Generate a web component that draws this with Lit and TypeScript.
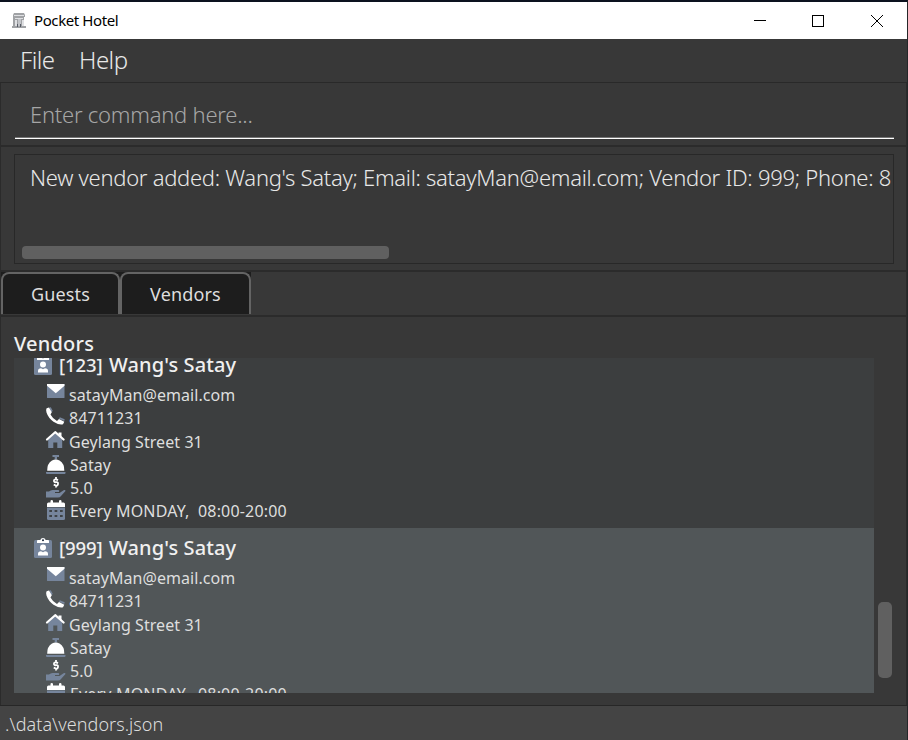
import { LitElement, html, svg, css } from "lit";
import { customElement, property } from "lit/decorators.js";

interface Vendor {
  id: string;
  name: string;
  email: string;
  phone: string;
  address: string;
  service: string;
  cost: string;
  hours: string;
}

const badge = svg`<svg class="ico" viewBox="0 0 18 20" width="18" height="20">
  <rect class="b" x="0" y="2" width="18" height="18" rx="1.5"/>
  <path class="w" d="M3 5V2.8Q3 2 4 2H6.3Q7 0 9 0T11.700 2H14Q15 2 15 2.800V5Z"/>
  <circle class="k" cx="9" cy="2.300" r="1"/>
  <circle class="w" cx="9" cy="9.600" r="3"/>
  <path class="w" d="M4 17.500V16Q4 13.300 7 13.300L9 14.300 11 13.300Q14 13.300 14 16V17.500Z"/></svg>`;
const mail = svg`<svg class="ico" viewBox="0 0 18 14" width="18" height="14">
  <rect class="b" width="17.500" height="14" rx=".5"/>
  <path class="w" d="M0 0H17.500V1.800L8.800 9.300 0 1.800Z"/></svg>`;
const phone = svg`<svg class="ico" viewBox="0 0 19 18" width="19" height="18">
  <path class="b" d="M3.300.500 4.800.200 6.800 4 5.300 5ZM13 11.700 13.800 10.200 18.700 12.300 18.200 14Z"/>
  <path class="w" d="M3 .500.600 1.200Q-.300 2.500.500 5.500 2.300 11 7.500 14.700 13 18.300 17 17.300L18.300 14.700 13 12 11 14Q6.500 11.500 4.500 7.500L5.800 5.300Z"/></svg>`;
const house = svg`<svg class="ico" viewBox="0 0 19 17" width="19" height="17">
  <path class="b" d="M2.200 8.500 9.200 2.500 16.200 8.500V17H11.300V11.500H7.300V17H2.200Z"/>
  <path class="l" d="M1 8.500 9.200 1.200 17.600 8.500"/>
  <path class="w" d="M12.500 1.500H15.500V7L12.500 4.300Z"/></svg>`;
const bell = svg`<svg class="ico" viewBox="0 0 20 19" width="20" height="19">
  <path class="b" d="M6.500 0H13V2H11V4.500H8.700V2H6.500ZM0 17H19.500V18Q19.500 19 18.500 19H1Q0 19 0 18Z"/>
  <path class="w" d="M1.200 15.700Q1 8.500 6 5.500 9.800 3.300 13.500 5.500 18.500 8.500 18.300 15.700Z"/></svg>`;
const hand = svg`<svg class="ico" viewBox="0 0 20 21" width="20" height="21">
  <path class="b" d="M0 14.500H3Q5 12.500 7.500 13H12.500Q13.800 13.500 13 15H9V16H13.500L18 13Q19.500 12.500 19.500 14L15 19Q14 20.500 12 20.500H0Z"/>
  <path class="d" d="M12 3.100Q8.400 1.300 8 3.400T10.100 5.200 11.900 7.400 7.800 7.400M10 0V2M10 8V10.500"/></svg>`;
const calendar = svg`<svg class="ico" viewBox="0 0 18 20" width="18" height="20">
  <path class="w" d="M0 7V4Q0 2.500 1.500 2.500H3.500V1Q3.500 0 4.700 0T6 1V2.500H12V1Q12 0 13.200 0T14.500 1V2.500H16.500Q18 2.500 18 4V7Z"/>
  <path class="b" d="M0 7.500H18V18.500Q18 20 16.500 20H1.500Q0 20 0 18.500Z"/>
  <path class="h" d="M2.300 10H5V12H2.300ZM7.600 10H10.300V12H7.600ZM13 10H15.700V12H13ZM2.300 15H5V17H2.300ZM7.600 15H10.300V17H7.600ZM13 15H15.700V17H13Z"/></svg>`;

@customElement("vendor-card")
export class VendorCard extends LitElement {
  @property({ attribute: false }) vendor!: Vendor;

  static styles = css`
    :host { display: block; height: 183px; box-sizing: border-box; padding-left: 20px; }
    .head { display: flex; height: 38px; align-items: center; font-size: 20px; font-weight: 500; color: #f0f0f0; white-space: pre; }
    .head .ico { margin: 2px 7px 0 0; }
    .id { width: 50px; font-size: 18.500px; letter-spacing: -.1px; }
    .name { letter-spacing: .1px; }
    .row { display: grid; grid-template-columns: 23px auto; padding-left: 12px; height: 23px; line-height: 23px; font-size: 16px; letter-spacing: .07px; color: #dedede; white-space: pre; align-items: start; }
    .tall { height: 24px; line-height: 24px; }
    .mail .ico { margin: 1px 0 0 1px; }
    .house .ico { margin-top: 1px; }
    .bell .ico { margin-top: 1px; }
    .cal .ico { margin-left: 1px; }
    .bell, .cost, .cal { grid-template-columns: 24px auto; }
    .cal { letter-spacing: .17px; }
    .ico { display: block; overflow: visible; flex: none; }
    .w { fill: #fff; }
    .b { fill: #76859c; }
    .k { fill: #16243a; }
    .h { fill: #3e4245; }
    .l { fill: none; stroke: #fff; stroke-width: 2.200; stroke-linecap: round; stroke-linejoin: round; }
    .d { fill: none; stroke: #fff; stroke-width: 1.800; }
  `;

  render() {
    const v = this.vendor;
    return html`
      <div class="head">${badge}<span class="id">[${v.id}]</span><span class="name">${v.name}</span></div>
      <div class="row tall mail">${mail}<span>${v.email}</span></div>
      <div class="row">${phone}<span>${v.phone}</span></div>
      <div class="row tall house">${house}<span>${v.address}</span></div>
      <div class="row bell">${bell}<span>${v.service}</span></div>
      <div class="row cost">${hand}<span>${v.cost}</span></div>
      <div class="row cal">${calendar}<span>${v.hours}</span></div>
    `;
  }
}

@customElement("app-root")
export class AppRoot extends LitElement {
  private vendors: Vendor[] = ["123", "999"].map((id) => ({
    id,
    name: "Wang's Satay",
    email: "satayMan@email.com",
    phone: "84711231",
    address: "Geylang Street 31",
    service: "Satay",
    cost: "5.0",
    hours: "Every MONDAY,  08:00-20:00",
  }));

  static styles = css`
    :host { display: flex; flex-direction: column; box-sizing: border-box; width: 908px; height: 740px; overflow: hidden; background: #383838; border-top: 2px solid #0c121f; border-right: 1px solid #252729; font-family: "Noto Sans", "Open Sans", sans-serif; }
    * { box-sizing: border-box; }
    .titlebar { flex: none; height: 37px; background: #fff; display: flex; align-items: center; padding: 0 1px 0 12px; color: #000; font-size: 15px; }
    .title { margin-left: 8px; padding-bottom: 2px; flex: 1; letter-spacing: -.4px; }
    .win { width: 58.500px; display: grid; place-items: center; }
    .win.min { width: 59px; }
    .menu { flex: none; height: 44px; border-bottom: 1px solid #292929; display: flex; align-items: center; padding: 0 0 2px 20px; font-size: 24px; font-weight: 300; letter-spacing: -.5px; color: #e8e8e8; }
    .file { width: 59px; }
    .pane { flex: none; border-left: 1px solid #2b2b2b; border-right: 1px solid #2b2b2b; border-bottom: 2px solid #2b2b2b; }
    .command { height: 64px; padding: 8px 12px 0 14px; }
    .input { height: 48px; border-bottom: 1px solid #fff; box-shadow: inset 0 -1px #757575; padding: 0 0 2px 15px; display: flex; align-items: center; font-size: 22px; letter-spacing: -.24px; font-weight: 300; color: #a6a6a6; }
    .output { height: 125px; padding: 7px 12px 6px 13px; }
    .result { height: 110px; border: 1px solid #282828; display: flex; flex-direction: column; padding: 6px 1px 4px 7px; overflow: hidden; }
    .message { flex: 1; padding-left: 8px; font-size: 22px; line-height: 32px; letter-spacing: -.28px; font-weight: 300; color: #e8e8e8; white-space: nowrap; }
    .hbar { width: 366.500px; height: 13px; border-radius: 4px; background: #606060; }
    .tabs { height: 45px; display: flex; align-items: flex-start; }
    .tab { height: 42px; border: 2px solid #646464; border-bottom: 0; border-radius: 8px 8px 0 0; background: #1d1d1d; color: #dedede; font-size: 18px; letter-spacing: .15px; display: grid; place-items: center; }
    .strip { display: flex; background: #1d1d1d; }
    .guests { width: 119px; }
    .vendors { width: 131px; }
    .browse { height: 388px; padding: 13px 0 0 13px; border-bottom: 0; }
    .heading { height: 28px; line-height: 28px; font-size: 20px; font-weight: 500; letter-spacing: .2px; color: #f0f0f0; }
    .scroll { display: flex; height: 335px; }
    .list { width: 860px; overflow: hidden; }
    .card { background: #3c3e3f; }
    .card:first-child { margin-top: -13px; }
    .card:last-child { background: #515658; }
    .vbar { align-self: flex-end; margin: 0 0 15.500px 3.500px; width: 14px; height: 76px; border-radius: 5px; background: #606060; }
    .status { flex: none; height: 36px; border-top: 1px solid #272727; background: #444; color: #ddd; padding-left: 5px; display: flex; align-items: center; font-size: 18px; font-weight: 300; letter-spacing: .04px; }
  `;

  render() {
    return html`
      <header class="titlebar">
        <svg width="14" height="17" viewBox="0 0 14 17"><path fill="#a0a2a5" d="M2 1H12L13 3V5H12V14H14V16H0V14H1V5H1V3Z"/><path fill="#dfe0e3" d="M2 3H12V4H2ZM3 6H11V7H3ZM3 8H5V14H3ZM10 8H12V14H10Z"/><path fill="#c3c5c9" d="M6 7H9V14H6Z"/><path fill="#565b66" d="M5 12H6V15H5ZM8 12H9V15H8Z"/></svg>
        <span class="title">Pocket Hotel</span>
        <span class="win min"><svg width="12" height="12"><path stroke="#000" d="M0 5.500H12"/></svg></span>
        <span class="win"><svg width="12" height="12"><rect x=".5" y=".5" width="11" height="11" fill="none" stroke="#000"/></svg></span>
        <span class="win"><svg width="12" height="12"><path stroke="#000" d="M0 0 12 12M12 0 0 12"/></svg></span>
      </header>
      <nav class="menu"><span class="file">File</span><span class="help">Help</span></nav>
      <section class="pane command"><div class="input"><span>Enter command here...</span></div></section>
      <section class="pane output">
        <div class="result">
          <div class="message">New vendor added: Wang's Satay; Email: satayMan@email.com; Vendor ID: 999; Phone: 8</div>
          <div class="hbar"></div>
        </div>
      </section>
      <section class="pane tabs"><div class="strip"><div class="tab guests">Guests</div><div class="tab vendors">Vendors</div></div></section>
      <main class="pane browse">
        <div class="heading">Vendors</div>
        <div class="scroll">
          <div class="list">${this.vendors.map((v) => html`<vendor-card class="card" .vendor=${v}></vendor-card>`)}</div>
          <div class="vbar"></div>
        </div>
      </main>
      <footer class="status">.\\data\\vendors.json</footer>
    `;
  }
}
